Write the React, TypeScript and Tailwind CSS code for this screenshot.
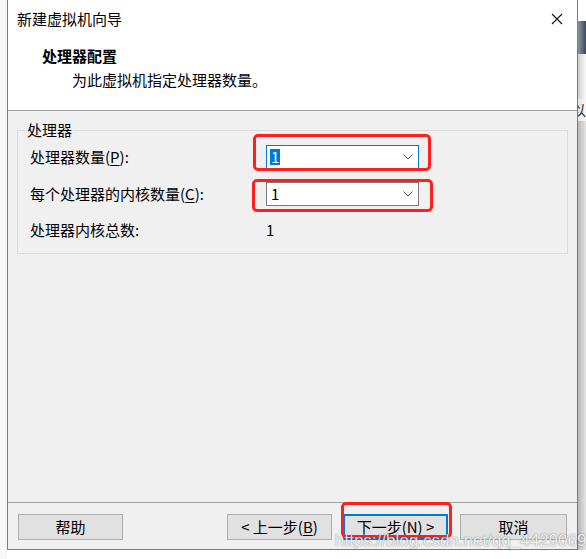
function Chevron() {
  return (
    <svg className="ml-auto" width="10" height="6" viewBox="0 0 10 6">
      <path d="M0.5 0.5 L5 5 L9.5 0.5" stroke="#505050" strokeWidth="1" fill="none" />
    </svg>
  );
}

function Combo({ value, focused }: { value: string; focused?: boolean }) {
  return (
    <div
      className={
        focused
          ? "w-[153px] h-[24px] bg-white border border-[#0078d7] flex items-center pl-[3px] pr-[5px]"
          : "w-[153px] h-[24px] bg-white border border-[#7a7a7a] flex items-center pl-[4px] pr-[5px]"
      }
    >
      {focused ? (
        <span className="bg-[#0078d7] text-white px-[1px] leading-[16px]">{value}</span>
      ) : (
        <span className="text-black">{value}</span>
      )}
      <Chevron />
    </div>
  );
}

function Btn({ children, primary, wide }: { children: React.ReactNode; primary?: boolean; wide?: boolean }) {
  const size = wide ? "w-[107px]" : "w-[105px]";
  return (
    <button
      type="button"
      className={
        primary
          ? size + " h-[26px] bg-[#e1e1e1] border-2 border-[#0078d7] flex items-center justify-center leading-[20px]"
          : size + " h-[26px] bg-[#e1e1e1] border border-[#adadad] flex items-center justify-center leading-[20px]"
      }
    >
      {children}
    </button>
  );
}

export default function App() {
  return (
    <div className="w-[586px] h-[559px] bg-white flex overflow-hidden relative font-['Noto_Sans_CJK_SC',sans-serif] text-[15px] text-black">
      {/* left desktop edge */}
      <div className="w-[7px] shrink-0 bg-[#f7f7f7]" />

      {/* dialog window */}
      <div className="w-[571px] h-[550px] shrink-0 border-x border-b border-[#7a7a7a] flex flex-col">
        {/* title bar */}
        <div className="h-[38px] bg-white flex items-center pl-[9px] pr-[14px]">
          <span className="leading-[20px]">新建虚拟机向导</span>
          <svg className="ml-auto" width="12" height="12" viewBox="0 0 12 12">
            <path d="M1 1 L11 11 M11 1 L1 11" stroke="#111" strokeWidth="1.1" fill="none" />
          </svg>
        </div>

        {/* header */}
        <div className="h-[73px] bg-white border-b border-[#a0a0a0] pt-[8px]">
          <div className="pl-[34px] font-bold leading-[20px]">处理器配置</div>
          <div className="pl-[64px] mt-[4px] leading-[20px]">为此虚拟机指定处理器数量。</div>
        </div>

        {/* content */}
        <div className="flex-1 bg-[#f0f0f0] px-[9px] pt-[9px]">
          <fieldset className="border border-[#dcdcdc] pb-[11px]">
            <legend className="ml-[8px] px-[1px] leading-[20px]">处理器</legend>
            <div className="grid grid-cols-[236px_153px] items-center mt-[5px] gap-y-[13px] pl-[12px]">
              <span className="leading-[20px]">
                处理器数量(<span className="underline underline-offset-2">P</span>):
              </span>
              <Combo value="1" focused />
              <span className="leading-[20px]">
                每个处理器的内核数量(<span className="underline underline-offset-2">C</span>):
              </span>
              <Combo value="1" />
              <span className="leading-[24px] -mt-[1px]">处理器内核总数:</span>
              <span className="leading-[24px] -mt-[1px]">1</span>
            </div>
          </fieldset>
        </div>

        {/* footer */}
        <div className="h-[47px] bg-[#f0f0f0] border-t border-[#a0a0a0] pt-[11px] pl-[10px] pr-[10px] flex items-start">
          <Btn>帮助</Btn>
          <div className="ml-auto flex gap-[11px]">
            <Btn>
              &lt; 上一步(<span className="underline underline-offset-2">B</span>)
            </Btn>
            <Btn primary>
              下一步(<span className="underline underline-offset-2">N</span>) &gt;
            </Btn>
            <div className="ml-[1px]">
              <Btn wide>取消</Btn>
            </div>
          </div>
        </div>
      </div>

      {/* right desktop edge */}
      <div className="flex-1 flex flex-col overflow-hidden">
        <div className="h-[21px] bg-white" />
        <div className="h-[33px] bg-linear-to-r from-[#8a96a2] to-[#3b4957]" />
        <div className="h-[45px] bg-linear-to-r from-[#d0d0d0] to-[#f8f8f8]" />
        <div className="h-[22px] bg-linear-to-r from-[#d0d0d0] to-[#f8f8f8] overflow-hidden whitespace-nowrap leading-[22px] -ml-[7px] text-[15px] text-[#333]">
          以板
        </div>
        <div className="flex-1 bg-linear-to-r from-[#b8b8b8] to-[#e4e4e4]" />
        <div className="h-[9px] bg-white" />
      </div>

      {/* annotation boxes */}
      <div className="absolute left-[253px] top-[134px] w-[178px] h-[37px] border-[3px] border-[#ff1f1f] rounded-[5px]" />
      <div className="absolute left-[252px] top-[179px] w-[181px] h-[33px] border-[3px] border-[#ff1f1f] rounded-[5px]" />
      <div className="absolute left-[341px] top-[502px] w-[111px] h-[36px] border-[3px] border-[#ff1f1f] rounded-[5px]" />

      {/* watermark */}
      <div className="absolute left-[335px] top-[530px] whitespace-nowrap font-['Liberation_Sans',sans-serif] text-[17px] leading-[22px] text-[#f2f2f2] [text-shadow:0_0_1px_rgba(0,0,0,0.45),0_0_2px_rgba(0,0,0,0.25)] opacity-85">
        https://blog.csdn.net/qq_44290699
      </div>
    </div>
  );
}
